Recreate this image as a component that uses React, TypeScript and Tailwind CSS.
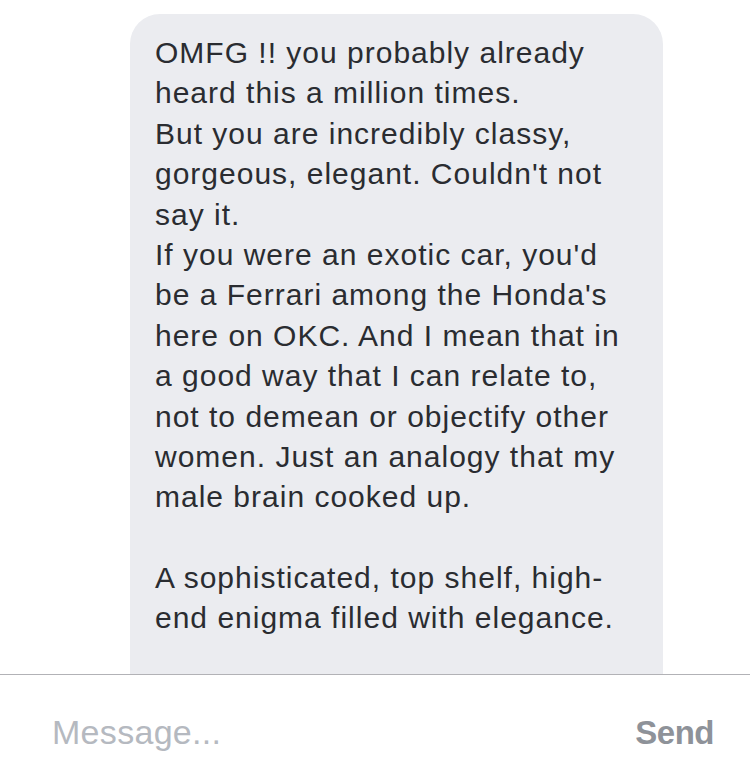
const lines = [
  "OMFG !! you probably already",
  "heard this a million times.",
  "But you are incredibly classy,",
  "gorgeous, elegant. Couldn't not",
  "say it.",
  "If you were an exotic car, you'd",
  "be a Ferrari among the Honda's",
  "here on OKC. And I mean that in",
  "a good way that I can relate to,",
  "not to demean or objectify other",
  "women. Just an analogy that my",
  "male brain cooked up.",
  "",
  "A sophisticated, top shelf, high-",
  "end enigma filled with elegance.",
];

export default function App() {
  return (
    <div className="flex h-[782px] w-[750px] flex-col bg-white font-['Liberation_Sans',Arial,sans-serif]">
      <div className="flex-1 overflow-hidden pt-[14px]">
        <div className="ml-[130px] w-[533px] rounded-[30px] bg-[#ebecf0] pl-[25px] pr-2 pt-[19px] pb-[80px] text-[30px] leading-[40.4px] tracking-[1px] text-[#2a2c31]">
          {lines.map((l, i) => (
            <div key={i} className="h-[40.4px] whitespace-nowrap">
              {l}
            </div>
          ))}
        </div>
      </div>
      <div className="flex h-[108px] items-center justify-between border-t border-[#b2b2b6] pl-[52px] pr-[36px] pt-[8px]">
        <span className="text-[34px] tracking-[0.3px] text-[#b5b9c0]">Message...</span>
        <span className="text-[33px] font-bold tracking-[-0.5px] text-[#8e9299]">Send</span>
      </div>
    </div>
  );
}
